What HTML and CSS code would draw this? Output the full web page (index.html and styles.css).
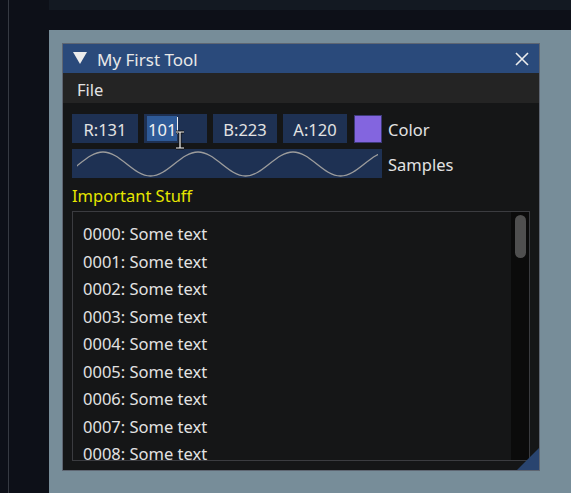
FILE: index.html
```html
<!DOCTYPE html>
<html lang="en">
<head>
    <meta charset="UTF-8">
    <meta name="viewport" content="width=device-width, initial-scale=1.0">
    <title>My First Tool</title>
    <link rel="stylesheet" href="styles.css">
</head>
<body>
    <div class="rail"><div class="rail-line"></div></div>

    <div class="main">
        <div class="tabs"></div>
        <div class="strip"></div>

        <div class="viewport">
            <div class="window">
                <div class="titlebar">
                    <svg class="collapse" width="14" height="12" viewBox="0 0 14 12">
                        <polygon points="0,0 14,0 7,12" fill="#ececec" />
                    </svg>
                    <span class="title">My First Tool</span>
                    <svg class="close" width="14" height="14" viewBox="0 0 14 14">
                        <path d="M1 1 L13 13 M13 1 L1 13" stroke="#ececec" stroke-width="1.6" />
                    </svg>
                </div>

                <div class="menubar">
                    <span class="menu-item">File</span>
                </div>

                <div class="content">
                    <div class="row">
                        <div class="field r">R:131</div>
                        <div class="field g editing">
                            <span class="selection">101</span><span class="caret"></span>
                        </div>
                        <div class="field b">B:223</div>
                        <div class="field a">A:120</div>
                        <div class="swatch"></div>
                        <span class="label">Color</span>
                    </div>

                    <div class="row">
                        <div class="plot">
                            <svg width="301" height="29" viewBox="5 0 301 29">
                                <path d="M -16.5 27 C 0.76 27 13.74 3 31 3
                                         S 61.24 27 78.5 27
                                         S 108.74 3 126 3
                                         S 156.24 27 173.5 27
                                         S 203.74 3 221 3
                                         S 251.24 27 268.5 27
                                         S 298.74 3 316 3"
                                      fill="none" stroke="#9c9c9c" stroke-width="1.4" />
                            </svg>
                        </div>
                        <span class="label">Samples</span>
                    </div>

                    <div class="heading">Important Stuff</div>

                    <div class="child">
                        <div class="lines">
                            <div class="line">0000: Some text</div>
                            <div class="line">0001: Some text</div>
                            <div class="line">0002: Some text</div>
                            <div class="line">0003: Some text</div>
                            <div class="line">0004: Some text</div>
                            <div class="line">0005: Some text</div>
                            <div class="line">0006: Some text</div>
                            <div class="line">0007: Some text</div>
                            <div class="line">0008: Some text</div>
                        </div>
                        <div class="scrollbar"><div class="grab"></div></div>
                    </div>
                </div>

                <!-- resize grip in the corner -->
                <svg class="grip" width="22" height="22" viewBox="0 0 22 22">
                    <polygon points="22,0 22,22 0,22" fill="#29446f" />
                </svg>

                <!-- mouse pointer over the text field -->
                <svg class="ibeam" width="12" height="20" viewBox="0 0 12 20">
                    <path d="M2 2 H10 M6 2 V18 M2 18 H10" stroke="#111" stroke-width="3" fill="none" />
                    <path d="M2 2 H10 M6 2 V18 M2 18 H10" stroke="#f4f4f4" stroke-width="1.2" fill="none" />
                </svg>
            </div>
        </div>
    </div>
</body>
</html>
```

FILE: styles.css
```css
body {
    margin: 0;
    height: 493px;
    display: flex;
    overflow: hidden;
    background-color: #0d1018;
    font-family: 'Noto Sans', 'Open Sans', sans-serif;
    font-size: 16.5px;
    color: #e2e2e2;
}

.rail {
    width: 49px;
    flex: none;
}

.rail-line {
    margin-left: 8px;
    width: 1px;
    height: 100%;
    background-color: #363a42;
}

.main {
    flex: 1;
    display: flex;
    flex-direction: column;
}

.tabs {
    height: 10px;
    background-color: #131922;
}

.strip {
    height: 20px;
}

.viewport {
    flex: 1;
    background-color: #778d99;
    padding: 13px 0 0 13px;
}

/* window */

.window {
    position: relative;
    width: 478px;
    height: 428px;
    box-sizing: border-box;
    border: 1px solid #5e6672;
    background-color: #151617;
    display: flex;
    flex-direction: column;
}

.titlebar {
    height: 29px;
    flex: none;
    display: flex;
    align-items: center;
    padding: 0 10px 0 10px;
    background-color: #2a4a7b;
    color: #e8e8e8;
}

.collapse {
    margin-top: -2px;
}

.title {
    flex: 1;
    margin-left: 10px;
    padding-top: 2px;
    font-size: 17px;
}

.menubar {
    height: 30px;
    flex: none;
    display: flex;
    align-items: center;
    padding: 3px 0 0 14px;
    box-sizing: border-box;
    background-color: #242424;
}

.content {
    flex: 1;
    display: flex;
    flex-direction: column;
    padding: 11px 9px 9px 9px;
    min-height: 0;
}

.row {
    display: flex;
    align-items: center;
    gap: 6px;
    height: 29px;
    margin-bottom: 6px;
}

.field {
    height: 29px;
    display: flex;
    align-items: center;
    justify-content: center;
    padding-top: 2px;
    box-sizing: border-box;
    background-color: #1e3153;
    white-space: nowrap;
}

.field.r { width: 66px; }
.field.g { width: 63px; }
.field.b { width: 64px; }
.field.a { width: 64px; }

.field.editing {
    justify-content: flex-start;
    padding: 2px 0 2px 3px;
    align-items: stretch;
}

.selection {
    display: flex;
    align-items: center;
    padding: 1px 1px 0;
    background-color: #2e5a97;
    color: #f2f2f2;
}

.caret {
    width: 1px;
    margin: 1px 0 7px;
    background-color: #f0f0f0;
}

.swatch {
    width: 26px;
    height: 26px;
    margin-left: 1px;
    border: 1px solid #3c3a78;
    background-color: rgb(131, 101, 223);
}

.label {
    padding-top: 2px;
    color: #e2e2e2;
}

.plot {
    width: 310px;
    height: 29px;
    padding-left: 5px;
    box-sizing: border-box;
    background-color: #1e3153;
}

.plot svg {
    display: block;
}

.heading {
    height: 27px;
    color: #e6e600;
}

/* scrolling child region */

.child {
    flex: 1;
    min-height: 0;
    display: flex;
    border: 1px solid #3b3c40;
}

.lines {
    flex: 1;
    overflow: hidden;
    padding: 8px 0 0 10px;
}

.line {
    height: 27.5px;
    line-height: 27.5px;
}

.scrollbar {
    width: 18px;
    flex: none;
    background-color: #0b0b0b;
    padding: 3px 3px 0 4px;
    box-sizing: border-box;
}

.grab {
    height: 43px;
    border-radius: 6px;
    background-color: #4f4f4f;
}

.grip {
    position: absolute;
    right: 0;
    bottom: 0;
}

.ibeam {
    position: absolute;
    left: 111px;
    top: 86px;
}
```
